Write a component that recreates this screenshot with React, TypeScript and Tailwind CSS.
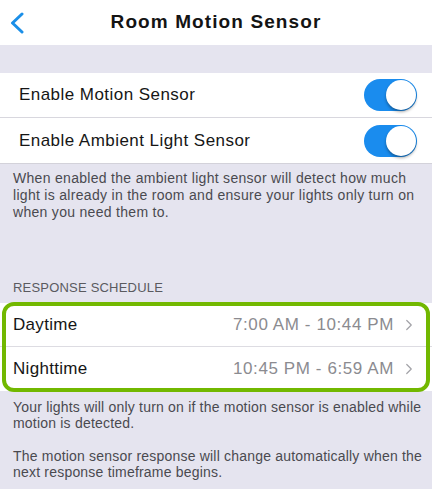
import { ChevronRight } from 'lucide-react';

const font = { fontFamily: '"Liberation Sans", Arial, sans-serif' };

function Toggle() {
  return (
    <div className="relative h-[32px] w-[53px] rounded-full bg-[#1a8cee]">
      <div className="absolute right-[1px] top-[1px] h-[30px] w-[30px] rounded-full bg-white shadow-[0_2px_3px_rgba(0,0,0,0.35)]" />
    </div>
  );
}

function SwitchRow({ label, last }: { label: string; last?: boolean }) {
  return (
    <div
      className={`flex h-[45px] items-center justify-between bg-white pl-[19px] pr-[15px] ${
        last ? '' : 'border-b border-[#d8d7de]'
      }`}
    >
      <span className="text-[17px] tracking-[0.45px] text-[#161616]">{label}</span>
      <Toggle />
    </div>
  );
}

function ScheduleRow({ label, range, last }: { label: string; range: string; last?: boolean }) {
  return (
    <div
      className={`flex h-[44px] items-center justify-between bg-white pl-[13px] pr-[14px] ${
        last ? '' : 'border-b border-[#dddce2]'
      }`}
    >
      <span className="text-[17px] tracking-[0.3px] text-[#161616]">{label}</span>
      <span className="flex items-center gap-[6px] text-[17px] tracking-[0.6px] text-[#8b8b90]">
        {range}
        <ChevronRight size={18} strokeWidth={1.6} className="text-[#a2a2a7]" />
      </span>
    </div>
  );
}

export default function App() {
  return (
    <div className="h-[489px] w-[432px] overflow-hidden bg-[#e5e4ef]" style={font}>
      {/* nav bar */}
      <div className="relative flex h-[45px] items-center justify-center bg-white">
        <svg
          className="absolute left-[9px] top-[12px]"
          width="16"
          height="22"
          viewBox="0 0 16 22"
          fill="none"
        >
          <path d="M13 2 L3.5 11 L13 20" stroke="#1b8fe8" strokeWidth="3" strokeLinecap="round" strokeLinejoin="round" />
        </svg>
        <h1 className="text-[19px] font-bold tracking-[1.1px] text-[#141414]">Room Motion Sensor</h1>
      </div>

      <div className="h-[28px]" />

      <div className="border-b border-[#d3d2da]">
        <SwitchRow label="Enable Motion Sensor" />
        <SwitchRow label="Enable Ambient Light Sensor" last />
      </div>

      <p className="pl-[13px] pr-[10px] pt-[6px] text-[14px] leading-[17px] tracking-[0.3px] text-[#4a4a4f]">
        When enabled the ambient light sensor will detect how much light is already in the room and ensure your lights
        only turn on when you need them to.
      </p>

      <div className="mt-[58px] px-[13px] text-[13px] leading-[17px] tracking-[0.2px] text-[#5a5a5f]">
        RESPONSE SCHEDULE
      </div>

      {/* schedule group with highlight ring */}
      <div className="relative mt-[7px]">
        <ScheduleRow label="Daytime" range="7:00 AM - 10:44 PM" />
        <ScheduleRow label="Nighttime" range="10:45 PM - 6:59 AM" last />
        <div className="pointer-events-none absolute inset-x-[2px] -top-[1px] -bottom-[1px] rounded-[12px] border-[4px] border-[#72b800]" />
      </div>

      <div className="pl-[13px] pr-[6px] pt-[8px] text-[14px] leading-[16px] tracking-[0.2px] text-[#4a4a4f]">
        <p>Your lights will only turn on if the motion sensor is enabled while motion is detected.</p>
        <p className="mt-[17px]">
          The motion sensor response will change automatically when the next response timeframe begins.
        </p>
      </div>
    </div>
  );
}
